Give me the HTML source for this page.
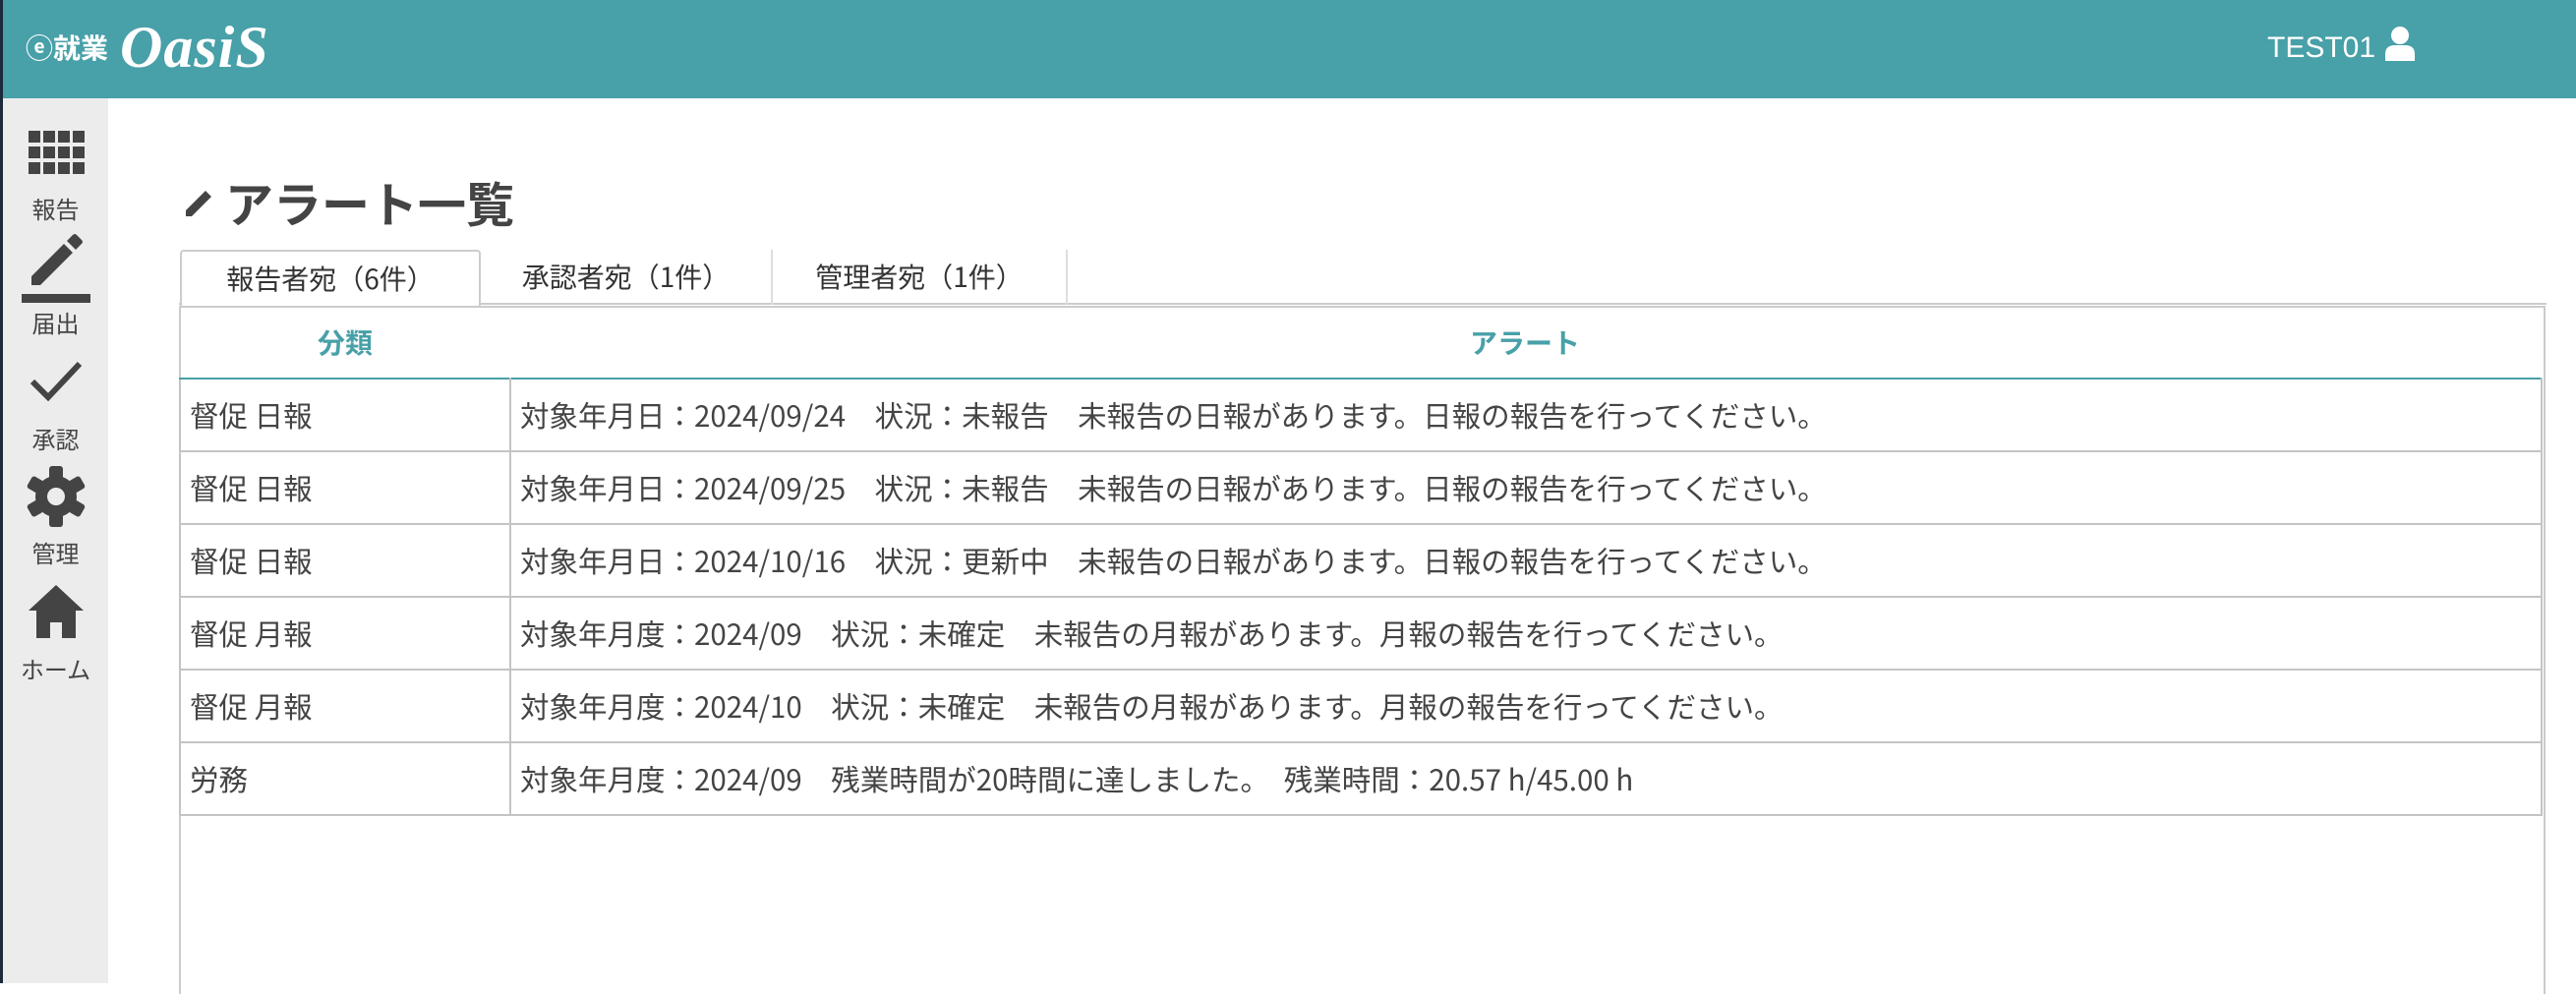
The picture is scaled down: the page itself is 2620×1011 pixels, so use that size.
<!DOCTYPE html>
<html><head><meta charset="utf-8"><style>
*{margin:0;padding:0;box-sizing:border-box}
body{width:2620px;height:1000px;overflow:hidden;background:#fff;font-family:"Liberation Sans","Noto Sans CJK JP",sans-serif;color:#444;position:relative}
.hdr{position:absolute;left:0;top:0;width:2620px;height:100px;background:#48a0a8}
.hdr .strip{position:absolute;left:0;top:0;width:3px;height:1000px;background:#1c2a3a}
.logo1{position:absolute;left:26px;top:28px;color:#fff;font-size:28px;font-weight:bold;font-family:"Liberation Sans","Noto Sans CJK JP",sans-serif}
.logo2{position:absolute;left:122px;top:14px;color:#fff;font-size:60px;font-style:italic;font-weight:bold;font-family:"Liberation Serif",serif;letter-spacing:1px}
.user{position:absolute;left:2306px;top:26px;color:#fff;font-size:30px}
.side{position:absolute;left:3px;top:100px;width:107px;height:900px;background:#ececec}
.lbl{position:absolute;width:107px;text-align:center;font-size:24px;color:#444}
.title{position:absolute;left:229px;top:170px;font-size:49px;font-weight:bold;color:#444;font-family:"Noto Sans CJK JP",sans-serif}
.tab{position:absolute;top:254px;height:56px;font-size:28px;color:#333;text-align:center;line-height:54px;font-family:"Noto Sans CJK JP",sans-serif}
.box{position:absolute;left:182px;top:311px;width:2407px;height:700px;border:2px solid #ccc;border-bottom:none}
table{position:absolute;left:182px;top:384px;border-collapse:collapse;width:2404px;font-family:"Noto Sans CJK JP",sans-serif}
td{border:2px solid #c4c4c4;height:74px;font-size:29.5px;color:#444;padding-left:9px;white-space:nowrap}
tr:first-child td{border-top:2px solid #48a0a8}
.th{position:absolute;top:328px;font-size:28px;font-weight:bold;color:#48a0a8;font-family:"Noto Sans CJK JP",sans-serif}
</style></head><body>
<div class="hdr"><div class="strip"></div>
<div class="logo1">ⓔ就業</div><div class="logo2">OasiS</div>
<div class="user">TEST01 <svg width="34" height="38" viewBox="0 0 34 38" style="vertical-align:-6px"><circle cx="17" cy="10" r="9" fill="#fff"/><path d="M2 36 V29 Q2 20 12 20 H22 Q32 20 32 29 V36 Z" fill="#fff"/></svg></div>
</div>
<div class="side">
<svg style="position:absolute;left:26px;top:33px" width="58" height="44" viewBox="0 0 58 44" fill="#444"><g id="r"><rect x="0" y="0" width="12" height="12"/><rect x="15" y="0" width="12" height="12"/><rect x="30" y="0" width="12" height="12"/><rect x="45" y="0" width="12" height="12"/></g><use href="#r" y="16"/><use href="#r" y="32"/></svg>
<div class="lbl" style="top:94px">報告</div>
<svg style="position:absolute;left:17px;top:133px" width="74" height="82" viewBox="0 0 74 82" fill="#444"><path d="M12 57 L12 48 L45 15 L54 24 L21 57 Z"/><path d="M48 12 L54 6 Q56 4 58 6 L63 11 Q65 13 63 15 L57 21 Z"/><rect x="2" y="66" width="70" height="9"/></svg>
<div class="lbl" style="top:210px">届出</div>
<svg style="position:absolute;left:26px;top:264px" width="56" height="46" viewBox="0 0 56 46"><path d="M4 24 L20 40 L52 6" fill="none" stroke="#444" stroke-width="6"/></svg>
<div class="lbl" style="top:328px">承認</div>
<svg style="position:absolute;left:24px;top:374px" width="60" height="62" viewBox="-30 -31 60 62"><g fill="#444"><rect x="-7" y="-31" width="14" height="62" rx="3"/><rect x="-7" y="-31" width="14" height="62" rx="3" transform="rotate(60)"/><rect x="-7" y="-31" width="14" height="62" rx="3" transform="rotate(120)"/><circle r="21"/></g><circle r="9" fill="#ececec"/></svg>
<div class="lbl" style="top:444px">管理</div>
<svg style="position:absolute;left:24px;top:493px" width="60" height="56" viewBox="0 0 60 56" fill="#444"><path d="M30 2 L58 28 H50 V56 H36 V40 H24 V56 H10 V28 H2 Z"/></svg>
<div class="lbl" style="top:562px">ホーム</div>
</div>
<svg style="position:absolute;left:187px;top:190px" width="32" height="32" viewBox="0 0 32 32" fill="#444"><path d="M2 30 L2 24 L22 4 L28 10 L8 30 Z"/></svg>
<div class="title">アラート一覧</div>
<div style="position:absolute;left:182px;top:308px;width:2408px;height:3px;border-top:2px solid #ccc"></div>
<div class="tab" style="left:183px;width:306px;border:2px solid #ccc;border-bottom:none;border-radius:4px 4px 0 0;background:#fff;height:58px">報告者宛（6件）</div>
<div class="tab" style="left:489px;width:297px;border-right:2px solid #ddd">承認者宛（1件）</div>
<div class="tab" style="left:786px;width:300px;border-right:2px solid #ddd">管理者宛（1件）</div>
<div class="box"></div>
<div class="th" style="left:323px">分類</div>
<div class="th" style="left:1495px">アラート</div>
<table>
<tr><td style="width:336px">督促 日報</td><td>対象年月日：2024/09/24　状況：未報告　未報告の日報があります。日報の報告を行ってください。</td></tr>
<tr><td>督促 日報</td><td>対象年月日：2024/09/25　状況：未報告　未報告の日報があります。日報の報告を行ってください。</td></tr>
<tr><td>督促 日報</td><td>対象年月日：2024/10/16　状況：更新中　未報告の日報があります。日報の報告を行ってください。</td></tr>
<tr><td>督促 月報</td><td>対象年月度：2024/09　状況：未確定　未報告の月報があります。月報の報告を行ってください。</td></tr>
<tr><td>督促 月報</td><td>対象年月度：2024/10　状況：未確定　未報告の月報があります。月報の報告を行ってください。</td></tr>
<tr><td>労務</td><td>対象年月度：2024/09　残業時間が20時間に達しました。　残業時間：20.57 h/45.00 h</td></tr>
</table>
</body></html>
